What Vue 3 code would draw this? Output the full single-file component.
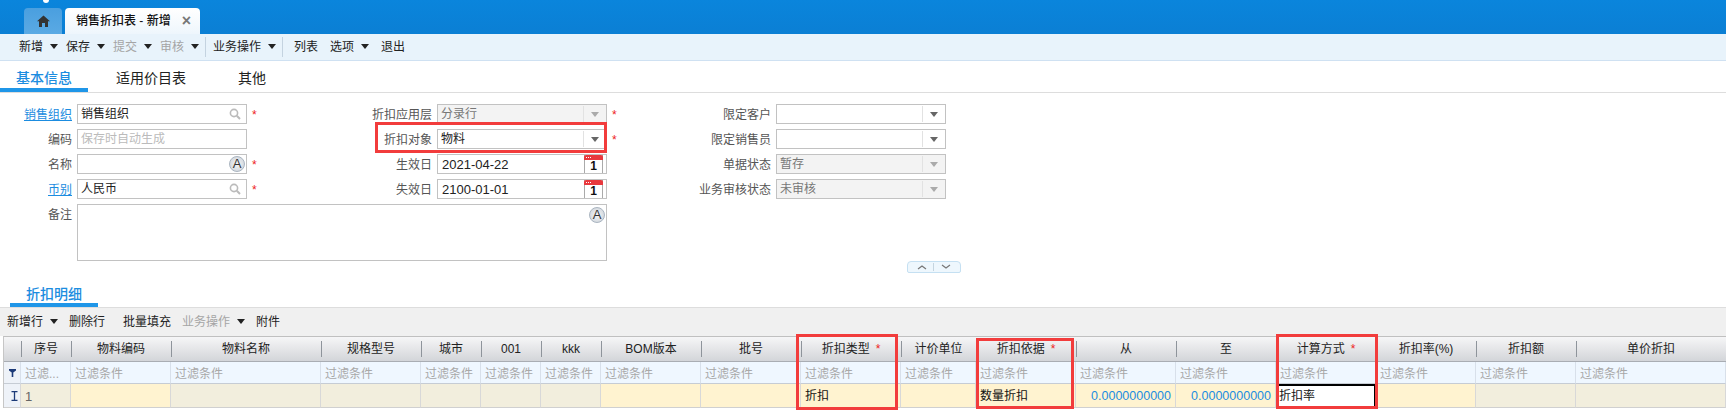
<script setup>
const tools = [
  { t: '新增', arrow: true }, { t: '保存', arrow: true }, { t: '提交', arrow: true, off: true }, { t: '审核', arrow: true, off: true, sep: true },
  { t: '业务操作', arrow: true, sep: true }, { t: '列表', lead: true }, { t: '选项', arrow: true }, { t: '退出' },
]
const subTools = [
  { t: '新增行', arrow: true }, { t: '删除行', wide: true }, { t: '批量填充' }, { t: '业务操作', arrow: true, off: true }, { t: '附件' },
]
const columns = [
  { h: '序号', w: 50, f: '过滤...', v: '1', kind: 'ro', num: true },
  { h: '物料编码', w: 100, kind: 'ed' },
  { h: '物料名称', w: 150, kind: 'ro' },
  { h: '规格型号', w: 100, kind: 'ro' },
  { h: '城市', w: 60, kind: 'ro' },
  { h: '001', w: 60, kind: 'ro' },
  { h: 'kkk', w: 60, kind: 'ro' },
  { h: 'BOM版本', w: 100, kind: 'ed' },
  { h: '批号', w: 100, kind: 'ed' },
  { h: '折扣类型', w: 100, req: true, v: '折扣', kind: 'ed' },
  { h: '计价单位', w: 75, kind: 'ed' },
  { h: '折扣依据', w: 100, req: true, v: '数量折扣', kind: 'ed' },
  { h: '从', w: 100, v: '0.0000000000', kind: 'ed', amount: true },
  { h: '至', w: 100, v: '0.0000000000', kind: 'ed', amount: true },
  { h: '计算方式', w: 100, req: true, v: '折扣率', kind: 'active' },
  { h: '折扣率(%)', w: 100, kind: 'ed' },
  { h: '折扣额', w: 100, kind: 'ro' },
  { h: '单价折扣', w: 150, kind: 'ro' },
]
const gridTemplate = '17px ' + columns.map(c => c.w + 'px').join(' ')
</script>

<template>
  <div class="page">
    <header class="topbar">
      <span class="dot"></span>
      <div class="tab-home">
        <svg width="13" height="12" viewBox="0 0 13 12"><path d="M6.5 0.5 L13 6.2 H11 V12 H8 V8 H5 V12 H2 V6.2 H0 Z" fill="#333"/></svg>
      </div>
      <div class="tab-active">
        <span>销售折扣表 - 新增</span>
        <span class="tab-close">×</span>
      </div>
    </header>

    <nav class="toolbar">
      <template v-for="item in tools" :key="item.t">
        <span class="tool" :class="{ off: item.off, lead: item.lead }">{{ item.t }}<i v-if="item.arrow" class="caret"></i></span>
        <span v-if="item.sep" class="tool-sep"></span>
      </template>
    </nav>

    <div class="main-tabs">
      <span class="main-tab on">基本信息</span>
      <span class="main-tab second">适用价目表</span>
      <span class="main-tab third">其他</span>
    </div>

    <section class="form">
      <label class="lab"><a>销售组织</a></label>
      <div class="field"><span>销售组织</span><svg class="ico-search" width="12" height="12" viewBox="0 0 12 12"><circle cx="5" cy="5" r="3.6" fill="none" stroke="#bbb" stroke-width="1.6"/><path d="M7.8 7.8 L11 11" stroke="#bbb" stroke-width="2"/></svg></div>
      <span class="star">*</span>
      <label class="lab">折扣应用层</label>
      <div class="field dis"><span>分录行</span><span class="dd"><i class="tri pale"></i></span></div>
      <span class="star">*</span>
      <label class="lab">限定客户</label>
      <div class="field"><span></span><span class="dd"><i class="tri"></i></span></div>

      <label class="lab">编码</label>
      <div class="field"><span class="ph">保存时自动生成</span></div>
      <span></span>
      <label class="lab">折扣对象</label>
      <div class="field"><span>物料</span><span class="dd"><i class="tri"></i></span></div>
      <span class="star">*</span>
      <label class="lab">限定销售员</label>
      <div class="field"><span></span><span class="dd"><i class="tri"></i></span></div>

      <label class="lab">名称</label>
      <div class="field"><span></span><span class="ico-a">A</span></div>
      <span class="star">*</span>
      <label class="lab">生效日</label>
      <div class="field"><span class="date">2021-04-22</span><span class="cal"><i class="cal-head"><u></u><u></u><u></u></i><b>1</b></span></div>
      <span></span>
      <label class="lab">单据状态</label>
      <div class="field dis"><span>暂存</span><span class="dd"><i class="tri pale"></i></span></div>

      <label class="lab"><a>币别</a></label>
      <div class="field"><span>人民币</span><svg class="ico-search" width="12" height="12" viewBox="0 0 12 12"><circle cx="5" cy="5" r="3.6" fill="none" stroke="#bbb" stroke-width="1.6"/><path d="M7.8 7.8 L11 11" stroke="#bbb" stroke-width="2"/></svg></div>
      <span class="star">*</span>
      <label class="lab">失效日</label>
      <div class="field"><span class="date">2100-01-01</span><span class="cal"><i class="cal-head"><u></u><u></u><u></u></i><b>1</b></span></div>
      <span></span>
      <label class="lab">业务审核状态</label>
      <div class="field dis"><span>未审核</span><span class="dd"><i class="tri pale"></i></span></div>

      <label class="lab">备注</label>
      <div class="field area"><span class="ico-a">A</span></div>
    </section>

    <div class="collapse-row">
      <div class="collapse">
        <svg width="10" height="6" viewBox="0 0 10 6"><path d="M1 5 L5 2 L9 5" fill="none" stroke="#777" stroke-width="1.2"/></svg>
        <i></i>
        <svg width="10" height="6" viewBox="0 0 10 6"><path d="M1 1 L5 4 L9 1" fill="none" stroke="#777" stroke-width="1.2"/></svg>
      </div>
    </div>

    <div class="sub-tabs"><span class="sub-tab">折扣明细</span></div>

    <nav class="sub-toolbar">
      <span v-for="item in subTools" :key="item.t" class="sub-tool" :class="{ off: item.off, wide: item.wide }">{{ item.t }}<i v-if="item.arrow" class="caret"></i></span>
    </nav>

    <div class="table" :style="{ gridTemplateColumns: gridTemplate }">
      <div class="th corner"></div>
      <div v-for="c in columns" :key="'h' + c.h" class="th">
        <span>{{ c.h }}</span><em v-if="c.req">*</em>
      </div>

      <div class="tf ind">
        <svg width="7" height="8" viewBox="0 0 7 8"><path d="M0 0 H7 V1.5 L4.3 3.5 V8 H2.7 V3.5 L0 1.5 Z" fill="#1c3a78"/></svg>
      </div>
      <div v-for="c in columns" :key="'f' + c.h" class="tf">{{ c.f || '过滤条件' }}</div>

      <div class="td ind">
        <svg width="7" height="10" viewBox="0 0 7 10"><path d="M0.5 0.7 H6.5 M0.5 9.3 H6.5 M3.5 0.7 V9.3" fill="none" stroke="#1c3a78" stroke-width="1.3"/></svg>
      </div>
      <div
        v-for="c in columns"
        :key="'d' + c.h"
        class="td"
        :class="[c.kind, { amount: c.amount, num: c.num }]"
      >{{ c.v }}</div>

      <span class="mark mark-type"></span>
      <span class="mark mark-basis"></span>
      <span class="mark mark-calc"></span>
    </div>

    <span class="mark mark-object"></span>
  </div>
</template>

<style>
html, body { margin: 0; background: #fff; }
</style>

<style scoped>
.page {
  position: relative;
  width: 1726px;
  height: 417px;
  overflow: hidden;
  background: #fff;
  color: #222;
  font: 12px/1.2 "Liberation Sans", "Noto Sans CJK SC", sans-serif;
}
.topbar {
  position: relative;
  height: 34px;
  display: flex;
  align-items: flex-end;
  padding-left: 24px;
  gap: 3px;
  box-sizing: border-box;
  background: linear-gradient(#0a85dc, #0b7fd4);
}
.dot {
  position: absolute;
  left: 43px;
  top: -3px;
  width: 6px;
  height: 6px;
  border-radius: 50%;
  background: #fff;
}
.tab-home {
  width: 38px;
  height: 26px;
  display: flex;
  align-items: center;
  justify-content: center;
  border-radius: 4px 4px 0 0;
  background: linear-gradient(#4a9fdf, #5aaae4);
}
.tab-active {
  width: 135px;
  height: 26px;
  box-sizing: border-box;
  padding-left: 11px;
  display: flex;
  align-items: center;
  border-radius: 4px 4px 0 0;
  background: linear-gradient(#fff, #eef6fc);
  color: #111;
  font-weight: 500;
  white-space: pre;
}
.tab-close {
  margin-left: 11px;
  color: #777;
  font-size: 16px;
  font-weight: 700;
  line-height: 1;
}
.toolbar {
  height: 27px;
  box-sizing: border-box;
  display: flex;
  align-items: center;
  padding-left: 19px;
  background: #e8f3fb;
  border-bottom: 1px solid #cfe1f2;
}
.tool {
  display: inline-flex;
  align-items: center;
  margin-right: 8px;
  color: #222;
}
.tool.lead { margin-left: 4px; margin-right: 12px; }
.tool.off { color: #a5a5a5; }
.tool .caret { margin-left: 7px; }
.tool:nth-last-child(2) { margin-right: 12px; }
.tool-sep {
  width: 1px;
  height: 20px;
  margin: 0 7px 0 -2px;
  background: #c4d3e0;
}
.caret {
  display: inline-block;
  width: 0;
  height: 0;
  border-left: 4px solid transparent;
  border-right: 4px solid transparent;
  border-top: 5px solid #222;
}
.main-tabs {
  height: 32px;
  box-sizing: border-box;
  display: flex;
  align-items: flex-end;
  border-bottom: 1px solid #ddd;
  font-size: 14px;
}
.main-tab {
  height: 31px;
  line-height: 35px;
  box-sizing: border-box;
}
.main-tab.on {
  width: 88px;
  padding-left: 16px;
  color: #1c8de0;
  font-weight: 500;
  border-bottom: 4px solid #1f96e8;
}
.main-tab.second { margin-left: 28px; }
.main-tab.third { margin-left: 52px; }
.form {
  display: grid;
  grid-template-columns: 72px 170px 75px 100px 170px 55px 99px 170px;
  grid-template-rows: 20px 20px 20px 20px 57px;
  column-gap: 5px;
  row-gap: 5px;
  padding-top: 11px;
}
.lab {
  text-align: right;
  line-height: 22px;
  color: #555;
  white-space: nowrap;
}
.lab a {
  color: #1b8ce0;
  text-decoration: underline;
}
.star {
  color: #e22;
  line-height: 22px;
  font-size: 12px;
}
.field {
  position: relative;
  display: flex;
  align-items: center;
  justify-content: space-between;
  box-sizing: border-box;
  height: 20px;
  padding-left: 3px;
  border: 1px solid #c2c2c2;
  background: #fff;
  color: #222;
}
.field > span:first-child:not(.ico-a) { padding-top: 1px; }
.field.dis { background: #f3f3f3; color: #777; }
.field.area {
  grid-column: 2 / span 4;
  height: 57px;
  align-items: flex-start;
  justify-content: flex-end;
  padding-top: 2px;
}
.ph { color: #bbb; }
.date { color: #222; padding-left: 1px; font-size: 13px; }
.dd {
  width: 22px;
  height: 16px;
  display: flex;
  align-items: center;
  justify-content: center;
  border-left: 1px solid #e2e2e2;
}
.tri {
  width: 0;
  height: 0;
  border-left: 4px solid transparent;
  border-right: 4px solid transparent;
  border-top: 5px solid #666;
}
.tri.pale { border-top-color: #aaa; }
.ico-search { margin-right: 5px; }
.ico-a {
  width: 16px;
  height: 16px;
  margin-right: 1px;
  box-sizing: border-box;
  border: 1px solid #a9b4c0;
  border-radius: 50%;
  background: radial-gradient(#f6f6f6, #c9d0d8);
  color: #333;
  font-size: 13px;
  line-height: 14px;
  text-align: center;
}
.cal {
  width: 19px;
  height: 18px;
  margin: -1px 3px 0 0;
  box-sizing: border-box;
  display: flex;
  flex-direction: column;
  align-items: center;
  border-left: 1px solid #aaa;
  border-right: 1px solid #aaa;
  background: #fff;
  color: #111;
}
.cal-head {
  flex: none;
  display: flex;
  align-items: center;
  gap: 1px;
  width: 19px;
  height: 5px;
  box-sizing: border-box;
  padding-left: 2px;
  border-radius: 2px 2px 0 0;
  background: #e8383d;
}
.cal-head u {
  width: 1px;
  height: 1px;
  background: #fff;
}
.cal b {
  font-size: 12px;
  line-height: 13px;
  font-weight: 700;
}
.collapse-row {
  height: 46px;
  box-sizing: border-box;
  padding: 0 0 0 907px;
}
.collapse {
  width: 54px;
  height: 12px;
  box-sizing: border-box;
  display: flex;
  align-items: center;
  justify-content: space-around;
  padding: 0 6px;
  border: 1px solid #c5e0f2;
  border-radius: 4px 4px 2px 2px;
  background: #eef7fd;
}
.collapse i { width: 1px; height: 8px; background: #c5d5e0; }
.sub-tabs {
  height: 0;
  position: relative;
}
.sub-tab {
  position: absolute;
  left: 10px;
  top: -24px;
  width: 88px;
  height: 24px;
  box-sizing: border-box;
  text-align: center;
  color: #1c8de0;
  font-size: 14px;
  font-weight: 500;
  line-height: 23px;
  border-bottom: 4px solid #1f96e8;
}
.sub-toolbar {
  height: 29px;
  box-sizing: border-box;
  display: flex;
  align-items: center;
  gap: 11px;
  padding-left: 7px;
  background: #f0f0f0;
  border-top: 1px solid #ddd;
}
.sub-tool { display: inline-flex; align-items: center; color: #222; }
.sub-tool.off { color: #a5a5a5; }
.sub-tool.wide { margin-right: 7px; }
.sub-tool .caret { margin-left: 7px; }
.table {
  position: relative;
  display: grid;
  grid-template-rows: 25px 22px 24px;
  margin-left: 3px;
  width: 1723px;
  border-left: 1px solid #c6c6c6;
  border-top: 1px solid #c0c0c0;
  box-sizing: border-box;
}
.th {
  position: relative;
  display: flex;
  align-items: center;
  justify-content: center;
  box-sizing: border-box;
  padding-top: 1px;
  border-bottom: 1px solid #a9adb3;
  background: linear-gradient(#f6f6f7, #d3d5d9);
  color: #222;
  white-space: nowrap;
}
.th::before {
  content: "";
  position: absolute;
  left: 0;
  top: 4px;
  bottom: 4px;
  width: 1px;
  background: #8e949b;
}
.th.corner::before { display: none; }
.th em {
  margin-left: 6px;
  color: #e22;
  font-style: normal;
}
.tf {
  box-sizing: border-box;
  padding-left: 4px;
  line-height: 24px;
  border-right: 1px solid #d8e0ea;
  border-bottom: 1px solid #c6ccd4;
  background: #eff7ff;
  color: #a8a8a8;
  white-space: nowrap;
  overflow: hidden;
}
.ind {
  display: flex;
  align-items: center;
  justify-content: center;
  padding: 0;
  background: #eef2f8;
}
.td {
  box-sizing: border-box;
  padding-left: 4px;
  line-height: 25px;
  border-right: 1px solid #d8d8d8;
  border-bottom: 1px solid #d0d0d0;
  color: #111;
  white-space: nowrap;
}
.td.ro { background: #f2eedd; }
.td.ed { background: #fff3d0; }
.td.num { color: #666; font-size: 13px; }
.td.amount {
  padding: 0 4px 0 0;
  text-align: right;
  color: #1c8de0;
  font-size: 12.5px;
}
.td.active {
  padding-left: 1px;
  line-height: 21px;
  background: #fff;
  border: 2px solid #000;
}
.mark {
  position: absolute;
  box-sizing: border-box;
  border: 3px solid #f23c3c;
  pointer-events: none;
}
.mark-object { left: 375px; top: 122px; width: 232px; height: 31px; }
.mark-type { left: 792px; top: -3px; width: 102px; height: 76px; }
.mark-basis { left: 972px; top: 1px; width: 98px; height: 71px; }
.mark-calc { left: 1272px; top: -3px; width: 102px; height: 75px; }
</style>
